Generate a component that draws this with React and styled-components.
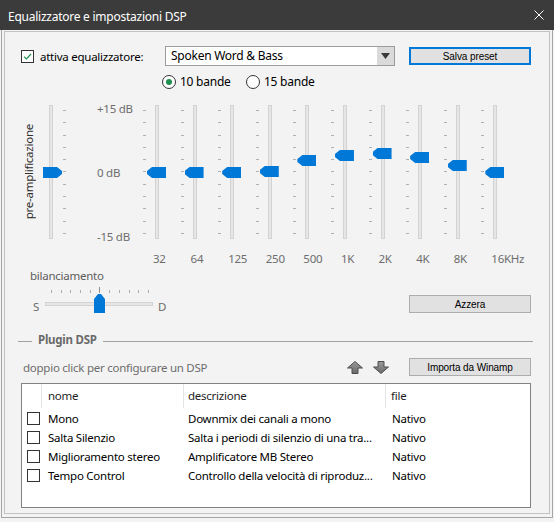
import React from 'react';
import styled, { createGlobalStyle } from 'styled-components';

const FONT = `"Noto Sans", "Open Sans", "DejaVu Sans", sans-serif`;
const BTN_FONT = `"Liberation Sans", Arial, sans-serif`;
const BLUE = '#0078d7';
const GREEN = '#1f8f4e';

const Global = createGlobalStyle`
  html, body { margin: 0; padding: 0; background: #f3f3f3; }
  body { font-family: ${FONT}; font-size: 11.5px; letter-spacing: -0.25px; }
  * { box-sizing: border-box; }
`;

const Window = styled.div`
  width: 554px;
  height: 522px;
  display: flex;
  flex-direction: column;
  background: #f3f3f3;
  overflow: hidden;
`;

const TitleBar = styled.div`
  height: 30px;
  flex: none;
  background: #3b3b3b;
  color: #fff;
  display: flex;
  align-items: center;
  justify-content: space-between;
  padding: 0 10px 0 8px;
  font-size: 12px;
`;

const TitleText = styled.span`
  padding-top: 2px;
`;

const CloseIcon = styled.svg`
  display: block;
  margin-bottom: 1px;
`;

const Body = styled.div`
  flex: 1;
  display: flex;
  min-height: 0;
  padding: 0 1px 4px 1px;
`;

const Frame = styled.div`
  flex: 1;
  display: flex;
  border: 1px solid #a6a6a6;
  border-top: none;
  padding: 1px 2px 3px 2px;
`;

const Panel = styled.div`
  flex: 1;
  display: flex;
  flex-direction: column;
  border: 1px solid #c2c2c2;
  padding: 14px 18px 0 16px;
`;

const TopRow = styled.div`
  display: flex;
  align-items: center;
  height: 20px;
`;

const EnableBox = styled.label`
  width: 144px;
  display: flex;
  align-items: center;
  gap: 6px;
  color: #000;
`;

const CheckBox = styled.span`
  width: 13px;
  height: 13px;
  flex: none;
  border: 1px solid #333;
  background: #fff;
  display: flex;
  align-items: center;
  justify-content: center;
`;

const Select = styled.div`
  width: 230px;
  height: 20px;
  margin-right: auto;
  border: 1px solid #9c9c9c;
  background: #fff;
  display: flex;
`;

const SelectText = styled.span`
  flex: 1;
  padding-left: 5px;
  line-height: 18px;
  color: #000;
  font-size: 12px;
`;

const SelectArrow = styled.span`
  width: 17px;
  background: #dadada;
  display: flex;
  align-items: center;
  justify-content: center;
`;

const Button = styled.button`
  width: 122px;
  height: 18px;
  flex: none;
  margin-top: ${p => p.$mt || 0}px;
  padding: 0;
  font-family: ${BTN_FONT};
  font-size: 10px;
  letter-spacing: -0.1px;
  color: #000;
  background: #e1e1e1;
  border: 1px solid ${p => (p.$focused ? BLUE : '#adadad')};
  box-shadow: ${p => (p.$focused ? `inset 0 0 0 1px ${BLUE}` : 'none')};
  display: flex;
  align-items: center;
  justify-content: center;
`;

const RadioRow = styled.div`
  display: flex;
  align-items: center;
  height: 15px;
  margin: 8px 0 0 141px;
`;

const RadioItem = styled.label`
  width: ${p => p.$w}px;
  display: flex;
  align-items: center;
  gap: 4px;
  color: #000;
  font-size: 12px;
`;

const Radio = styled.span`
  width: 14px;
  height: 14px;
  flex: none;
  border-radius: 50%;
  border: 1px solid #333;
  background: #fff;
  display: flex;
  align-items: center;
  justify-content: center;
  &::after {
    content: '';
    width: 6px;
    height: 6px;
    border-radius: 50%;
    background: ${p => (p.$on ? GREEN : 'transparent')};
  }
`;

const EqRow = styled.div`
  display: flex;
  align-items: flex-start;
  margin-top: 16px;
`;

const PreLabel = styled.div`
  width: 15px;
  height: 134px;
  margin-right: 13px;
  display: flex;
  align-items: center;
  justify-content: center;
`;

const VerticalText = styled.span`
  writing-mode: vertical-rl;
  transform: rotate(180deg);
  white-space: nowrap;
  color: #2e2e2e;
  line-height: 15px;
`;

const VSlider = styled.div`
  display: flex;
  flex-direction: ${p => (p.$ticksLeft ? 'row' : 'row-reverse')};
  justify-content: ${p => (p.$ticksLeft ? 'center' : 'flex-end')};
  gap: ${p => (p.$ticksLeft ? 9 : 10)}px;
  height: 134px;
  padding-right: ${p => (p.$ticksLeft ? 12 : 0)}px;
`;

const TickCol = styled.div`
  width: 3px;
  height: 100%;
  display: flex;
  flex-direction: column;
  justify-content: space-between;
  padding: 5px 0;
`;

const Tick = styled.span`
  display: block;
  width: 3px;
  height: 1px;
  background: #b0b0b0;
`;

const VTrack = styled.div`
  position: relative;
  width: 4px;
  height: 100%;
  background: #e6e6e6;
  border: 1px solid #d3d3d3;
`;

const VThumb = styled.div`
  position: absolute;
  width: 19px;
  height: 11px;
  background: ${BLUE};
  left: ${p => (p.$point === 'left' ? -9 : -7)}px;
  clip-path: ${p =>
    p.$point === 'left'
      ? 'polygon(0 4px, 5px 0, 100% 0, 100% 100%, 5px 100%, 0 7px)'
      : 'polygon(0 0, 14px 0, 100% 4px, 100% 7px, 14px 100%, 0 100%)'};
`;

const DbScale = styled.div`
  width: 41.2px;
  height: 144px;
  margin: -4px 0 0 31px;
  display: flex;
  flex-direction: column;
  justify-content: space-between;
  line-height: 16px;
  color: #6d6d6d;
  white-space: nowrap;
`;

const Bands = styled.div`
  display: grid;
  grid-template-columns: repeat(10, 37.6px);
`;

const BandCol = styled.div`
  display: flex;
  flex-direction: column;
`;

const BandLabel = styled.div`
  margin-top: 12px;
  padding-left: 14.8px;
  line-height: 16px;
  color: #6d6d6d;
  white-space: nowrap;
`;

const BalanceSection = styled.div`
  display: flex;
  align-items: flex-start;
  justify-content: space-between;
  margin-top: 1px;
`;

const BalanceBlock = styled.div`
  display: flex;
  flex-direction: column;
  margin-left: 9px;
`;

const BalanceTitle = styled.div`
  line-height: 16px;
  color: #5c5c5c;
`;

const BalanceRow = styled.div`
  display: flex;
  align-items: flex-start;
  margin: 3px 0 0 3px;
`;

const SideLetter = styled.span`
  width: ${p => p.$w}px;
  margin-left: ${p => p.$ml || 0}px;
  padding-top: 13px;
  line-height: 14px;
  color: #6d6d6d;
`;

const HSlider = styled.div`
  position: relative;
  width: 108px;
  height: 26px;
`;

const HTickRow = styled.div`
  display: flex;
  justify-content: space-between;
  align-items: flex-end;
  height: 6px;
  padding: 0 4px 0 6px;
`;

const HTick = styled.span`
  display: block;
  width: 1px;
  height: ${p => (p.$major ? 6 : 3)}px;
  background: ${p => (p.$major ? '#909090' : '#acacac')};
`;

const HTrack = styled.div`
  height: 4px;
  margin-top: 9px;
  background: #e6e6e6;
  border: 1px solid #d3d3d3;
`;

const HThumb = styled.div`
  position: absolute;
  left: 49px;
  top: 7px;
  width: 11px;
  height: 19px;
  background: ${BLUE};
  clip-path: polygon(0 5px, 4px 0, 7px 0, 100% 5px, 100% 100%, 0 100%);
`;

const GroupHeader = styled.div`
  display: flex;
  align-items: center;
  height: 16px;
  margin: 18px -2px 0 -3px;
`;

const GroupLine = styled.span`
  display: block;
  height: 1px;
  margin-top: 2px;
  background: #a0a0a0;
  width: ${p => (p.$w ? `${p.$w}px` : 'auto')};
  flex: ${p => (p.$w ? 'none' : '1')};
`;

const GroupTitle = styled.span`
  padding: 0 6px;
  line-height: 16px;
  font-weight: bold;
  color: #6a6a6a;
`;

const HintRow = styled.div`
  display: flex;
  align-items: center;
  height: 18px;
  margin-top: 10px;
`;

const Hint = styled.span`
  margin-left: 2px;
  color: #6d6d6d;
`;

const ArrowGroup = styled.div`
  display: flex;
  gap: 10px;
  margin: 0 20px 0 auto;
`;

const Table = styled.div`
  margin-top: 7px;
  height: 125px;
  flex: none;
  border: 1px solid #828282;
  background: #fff;
  display: flex;
  flex-direction: column;
`;

const HeadRow = styled.div`
  display: grid;
  grid-template-columns: 20px 142px 202px 1fr;
  height: 24px;
`;

const HeadCell = styled.div`
  border-right: ${p => (p.$last ? 'none' : '1px solid #e5e5e5')};
  padding-left: ${p => p.$pad}px;
  line-height: 24px;
  color: #1e1e1e;
`;

const Rows = styled.div`
  padding-top: 1px;
`;

const Row = styled.div`
  display: grid;
  grid-template-columns: 20px 142px 202px 1fr;
  height: 19px;
  align-items: center;
`;

const Cell = styled.div`
  padding-left: ${p => p.$pad}px;
  white-space: nowrap;
  overflow: hidden;
  color: #000;
  display: flex;
  align-items: center;
`;

const CheckMark = () => (
  <svg width="11" height="11" viewBox="0 0 11 11">
    <path d="M2 5.6 L4.4 8 L9 3" fill="none" stroke={GREEN} strokeWidth="1.2" />
  </svg>
);

const Ticks = () => (
  <TickCol>
    {Array.from({ length: 11 }).map((_, i) => (
      <Tick key={i} />
    ))}
  </TickCol>
);

const thumbTop = db => Math.round(61 - db * 4.133);

const bands = [
  { f: '32', v: 0 },
  { f: '64', v: 0 },
  { f: '125', v: 0 },
  { f: '250', v: 0.25 },
  { f: '500', v: 2.9 },
  { f: '1K', v: 4.1 },
  { f: '2K', v: 4.6 },
  { f: '4K', v: 3.6 },
  { f: '8K', v: 1.7 },
  { f: '16KHz', v: 0 },
];

const plugins = [
  ['Mono', 'Downmix dei canali a mono', 'Nativo'],
  ['Salta Silenzio', 'Salta i periodi di silenzio di una tra...', 'Nativo'],
  ['Miglioramento stereo', 'Amplificatore MB Stereo', 'Nativo'],
  ['Tempo Control', 'Controllo della velocità di riproduz...', 'Nativo'],
];

const UpArrow = () => (
  <svg width="16" height="13" viewBox="0 0 16 13">
    <defs>
      <linearGradient id="ga" x1="0" y1="0" x2="0" y2="1">
        <stop offset="0" stopColor="#9a9a9a" />
        <stop offset="1" stopColor="#6a6a6a" />
      </linearGradient>
    </defs>
    <polygon points="8,0.5 15.5,7 11,7 11,12.5 5,12.5 5,7 0.5,7" fill="url(#ga)" stroke="#4d4d4d" strokeWidth="1" strokeLinejoin="round" />
  </svg>
);

const DownArrow = () => (
  <svg width="16" height="13" viewBox="0 0 16 13">
    <defs>
      <linearGradient id="gb" x1="0" y1="0" x2="0" y2="1">
        <stop offset="0" stopColor="#9a9a9a" />
        <stop offset="1" stopColor="#6a6a6a" />
      </linearGradient>
    </defs>
    <polygon points="5,0.5 11,0.5 11,6 15.5,6 8,12.5 0.5,6 5,6" fill="url(#gb)" stroke="#4d4d4d" strokeWidth="1" strokeLinejoin="round" />
  </svg>
);

export default function App() {
  return (
    <Window>
      <Global />
      <TitleBar>
        <TitleText>Equalizzatore e impostazioni DSP</TitleText>
        <CloseIcon width="10" height="10" viewBox="0 0 10 10">
          <path d="M0.5 0.5 L9.5 9.5 M9.5 0.5 L0.5 9.5" stroke="#fff" strokeWidth="1" />
        </CloseIcon>
      </TitleBar>
      <Body>
        <Frame>
          <Panel>
            <TopRow>
              <EnableBox>
                <CheckBox>
                  <CheckMark />
                </CheckBox>
                attiva equalizzatore:
              </EnableBox>
              <Select>
                <SelectText>Spoken Word &amp; Bass</SelectText>
                <SelectArrow>
                  <svg width="9" height="6" viewBox="0 0 9 6">
                    <polygon points="0,0 9,0 4.5,6" fill="#3a3a3a" />
                  </svg>
                </SelectArrow>
              </Select>
              <Button $focused>Salva preset</Button>
            </TopRow>

            <RadioRow>
              <RadioItem $w={84}>
                <Radio $on />
                10 bande
              </RadioItem>
              <RadioItem $w={90}>
                <Radio />
                15 bande
              </RadioItem>
            </RadioRow>

            <EqRow>
              <PreLabel>
                <VerticalText>pre-amplificazione</VerticalText>
              </PreLabel>
              <VSlider>
                <Ticks />
                <VTrack>
                  <VThumb $point="right" style={{ top: thumbTop(0) }} />
                </VTrack>
              </VSlider>
              <DbScale>
                <span>+15 dB</span>
                <span>0 dB</span>
                <span>-15 dB</span>
              </DbScale>
              <Bands>
                {bands.map(b => (
                  <BandCol key={b.f}>
                    <VSlider $ticksLeft>
                      <Ticks />
                      <VTrack>
                        <VThumb $point="left" style={{ top: thumbTop(b.v) }} />
                      </VTrack>
                    </VSlider>
                    <BandLabel>{b.f}</BandLabel>
                  </BandCol>
                ))}
              </Bands>
            </EqRow>

            <BalanceSection>
              <BalanceBlock>
                <BalanceTitle>bilanciamento</BalanceTitle>
                <BalanceRow>
                  <SideLetter $w={12}>S</SideLetter>
                  <HSlider>
                    <HTickRow>
                      {Array.from({ length: 11 }).map((_, i) => (
                        <HTick key={i} $major={i === 5} />
                      ))}
                    </HTickRow>
                    <HTrack />
                    <HThumb />
                  </HSlider>
                  <SideLetter $w={12} $ml={5}>D</SideLetter>
                </BalanceRow>
              </BalanceBlock>
              <Button $mt={27}>Azzera</Button>
            </BalanceSection>

            <GroupHeader>
              <GroupLine $w={14} />
              <GroupTitle>Plugin DSP</GroupTitle>
              <GroupLine />
            </GroupHeader>

            <HintRow>
              <Hint>doppio click per configurare un DSP</Hint>
              <ArrowGroup>
                <UpArrow />
                <DownArrow />
              </ArrowGroup>
              <Button>Importa da Winamp</Button>
            </HintRow>

            <Table>
              <HeadRow>
                <HeadCell $pad={0} />
                <HeadCell $pad={6}>nome</HeadCell>
                <HeadCell $pad={4}>descrizione</HeadCell>
                <HeadCell $pad={5} $last>file</HeadCell>
              </HeadRow>
              <Rows>
                {plugins.map(([n, d, f]) => (
                  <Row key={n}>
                    <Cell $pad={5}>
                      <CheckBox />
                    </Cell>
                    <Cell $pad={6}>{n}</Cell>
                    <Cell $pad={4}>{d}</Cell>
                    <Cell $pad={6}>{f}</Cell>
                  </Row>
                ))}
              </Rows>
            </Table>
          </Panel>
        </Frame>
      </Body>
    </Window>
  );
}
